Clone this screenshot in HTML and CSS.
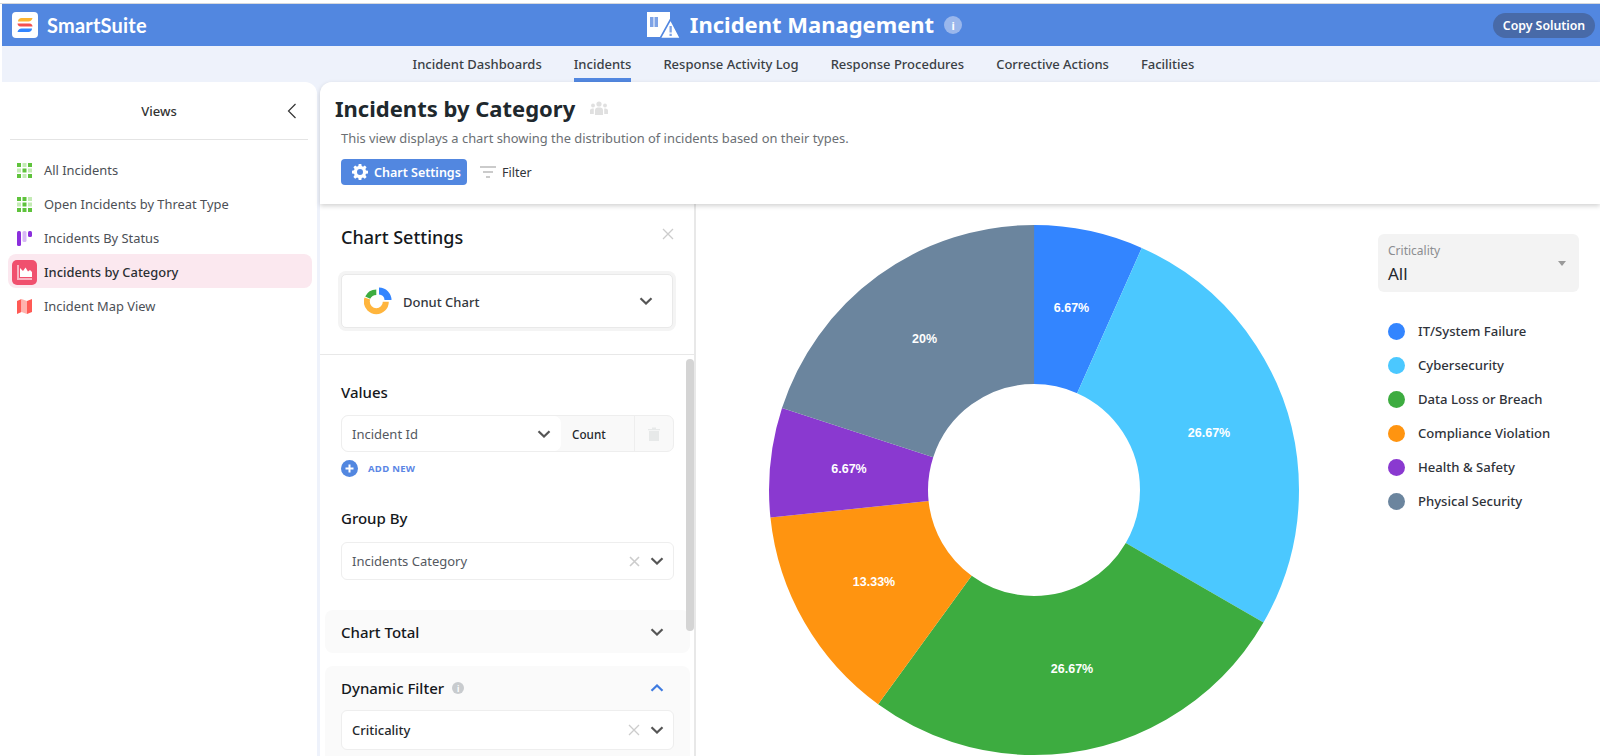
FILE: index.html
```html
<!DOCTYPE html>
<html lang="en">
<head>
<meta charset="utf-8">
<title>Incident Management</title>
<link rel="stylesheet" href="styles.css">
</head>
<body>
<div class="app">
  <header class="topbar">
    <div class="brand">
      <span class="logo">
        <svg width="26" height="26" viewBox="0 0 26 26"><rect width="26" height="26" rx="4" fill="#fff"/><path d="M6 9.500C6 7.500 7.500 6 9.500 6H20.500C20 8 18.500 9.500 16.500 9.500Z" fill="#fdb531"/><path d="M5.500 11.500H17.500C19.500 11.500 20.500 13 20.500 14.500H8.500C6.500 14.500 5.500 13 5.500 11.500Z" fill="#f4504f"/><path d="M9.500 16.500H20C20 18.500 18.500 20 16.500 20H5.500C6 18 7.500 16.500 9.500 16.500Z" fill="#3385ff"/></svg>
      </span>
      <span class="brand-name">SmartSuite</span>
    </div>
    <div class="app-title">
      <svg class="title-icon" width="34" height="27" viewBox="0 0 34 27"><path d="M0 0H23V25H0Z" fill="#fff"/><path d="M3 5H6.500V15H3ZM7.500 5H11V15H7.500Z" fill="#7ea3e6"/><path d="M23.500 7.500 33.500 26.500H13Z" fill="#fff" stroke="#5287e0" stroke-width="1.600"/><path d="M22.500 14H24.800V20.500H22.500ZM22.500 21.800H24.800V24H22.500Z" fill="#7ea3e6"/></svg>
      <h1>Incident Management</h1>
      <span class="info-dot">i</span>
    </div>
    <div class="top-actions"><button class="copy-btn">Copy Solution</button></div>
  </header>

  <nav class="tabs">
    <a class="tab">Incident Dashboards</a>
    <a class="tab active">Incidents</a>
    <a class="tab">Response Activity Log</a>
    <a class="tab">Response Procedures</a>
    <a class="tab">Corrective Actions</a>
    <a class="tab">Facilities</a>
  </nav>

  <div class="workspace">
    <aside class="sidebar">
      <div class="side-head">
        <span class="side-title">Views</span>
        <svg class="side-collapse" width="10" height="16" viewBox="0 0 10 16"><path d="M8.500 1 1.500 8l7 7" fill="none" stroke="#333" stroke-width="1.200"/></svg>
      </div>
      <ul class="view-list">
        <li class="view">
          <svg width="15" height="15" viewBox="0 0 15 15"><path fill="#5fc33c" d="M0 0h4v4H0zM11 0h4v4h-4zM5.500 5.500h4v4h-4zM0 11h4v4H0zM11 11h4v4h-4z"/><path fill="#c4ebb5" d="M5.500 0h4v4h-4zM0 5.500h4v4H0zM11 5.500h4v4h-4zM5.500 11h4v4h-4z"/></svg>
          All Incidents
        </li>
        <li class="view">
          <svg width="15" height="15" viewBox="0 0 15 15"><path fill="#5fc33c" d="M0 0h4v4H0zM5.500 0h4v4h-4zM5.500 5.500h4v4h-4zM0 11h4v4H0zM5.500 11h4v4h-4zM11 11h4v4h-4z"/><path fill="#c4ebb5" d="M11 0h4v4h-4zM0 5.500h4v4H0zM11 5.500h4v4h-4z"/></svg>
          Open Incidents by Threat Type
        </li>
        <li class="view">
          <svg width="15" height="15" viewBox="0 0 15 15"><rect x="0" y="0" width="4" height="15" rx="1.500" fill="#8b2fdc"/><rect x="5.500" y="0" width="4" height="11" rx="1.500" fill="#d8b8f6"/><rect x="11" y="0" width="4" height="6" rx="1.500" fill="#8b2fdc"/></svg>
          Incidents By Status
        </li>
        <li class="view current">
          <span class="view-badge"><svg width="15" height="15" viewBox="0 0 15 15"><path d="M0 0H2V13H15V15H0Z" fill="#f8b4c2"/><path d="M3 12V3L6 6 8.500 2.500 11 6.500 13 5 15 7V12Z" fill="#fff"/></svg></span>
          Incidents by Category
        </li>
        <li class="view">
          <svg width="15" height="15" viewBox="0 0 15 15"><path d="M0 2 4.500 0V13L0 15Z" fill="#ff5a55"/><path d="M4.500 0 10 2V15L4.500 13Z" fill="#ffb2ad"/><path d="M10 2 15 0V13L10 15Z" fill="#ff5a55"/></svg>
          Incident Map View
        </li>
      </ul>
    </aside>

    <main class="main">
      <section class="view-head">
        <div class="view-title-row">
          <h2>Incidents by Category</h2>
          <svg width="18" height="14" viewBox="0 0 18 14"><g fill="#e0e0e0"><circle cx="9" cy="3" r="2.600"/><circle cx="3" cy="4.500" r="1.900"/><circle cx="15" cy="4.500" r="1.900"/><path d="M5 14V9C5 7 7 6.500 9 6.500S13 7 13 9V14ZM0 13V9.500C0 8 1.500 7.500 3.800 7.500V13ZM18 13V9.500C18 8 16.500 7.500 14.200 7.500V13Z"/></g></svg>
        </div>
        <p class="view-desc">This view displays a chart showing the distribution of incidents based on their types.</p>
        <div class="view-actions">
          <button class="settings-btn">
            <svg width="16" height="16" viewBox="0 0 16 16"><path fill="#fff" fill-rule="evenodd" d="M6.700 0h2.600l.4 2.100 1.300.6 1.800-1.200 1.800 1.800-1.200 1.800.6 1.300 2 .4v2.600l-2 .4-.6 1.300 1.200 1.800-1.800 1.800-1.800-1.200-1.300.6-.4 2H6.700l-.4-2-1.300-.6-1.800 1.200-1.800-1.800 1.200-1.800-.6-1.300-2-.4V6.700l2-.4.6-1.300L1.400 3.200l1.800-1.800L5 2.700l1.300-.6ZM8 5a3 3 0 1 0 0 6 3 3 0 0 0 0-6Z"/></svg>
            Chart Settings
          </button>
          <span class="filter-link">
            <svg width="16" height="12" viewBox="0 0 16 12"><path d="M0 1h16M3 6h10M6 11h4" stroke="#bbb" stroke-width="1.500" fill="none"/></svg>
            Filter
          </span>
        </div>
      </section>

      <div class="split">
        <section class="settings">
          <div class="settings-top">
            <div class="settings-title-row">
              <h3>Chart Settings</h3>
              <svg width="12" height="12" viewBox="0 0 12 12"><path d="M1 1l10 10M11 1 1 11" stroke="#ccc" stroke-width="1.300"/></svg>
            </div>
            <div class="chart-type">
              <svg width="28" height="28" viewBox="0 0 28 28"><circle cx="12.300" cy="14.700" r="9.500" fill="none" stroke="#ffb53d" stroke-width="6" stroke-dasharray="33 60"/><path d="M3.700 10.700A9.500 9.500 0 0 1 12.300 5.200" fill="none" stroke="#3dac40" stroke-width="5.500"/><path d="M15 .5A12.500 12.500 0 0 1 27.500 13H20.500A5.500 5.500 0 0 0 15 7.500Z" fill="#3385ff"/></svg>
              <span class="chart-type-name">Donut Chart</span>
              <svg class="chev" width="14" height="8" viewBox="0 0 14 8"><path d="M1.500 1.200 7 6.500l5.500-5.300" fill="none" stroke="#555" stroke-width="2.200"/></svg>
            </div>
          </div>
          <div class="settings-body">
            <div class="form-block">
              <h4>Values</h4>
              <div class="value-row">
                <div class="value-field">
                  <span>Incident Id</span>
                  <svg class="chev" width="14" height="8" viewBox="0 0 14 8"><path d="M1.500 1.200 7 6.500l5.500-5.300" fill="none" stroke="#555" stroke-width="2.200"/></svg>
                </div>
                <div class="value-agg">Count</div>
                <div class="value-trash">
                  <svg width="12" height="14" viewBox="0 0 12 14"><path d="M0 2h12v1.200H0ZM4 .5h4V2H4ZM1 4h10v10H1Z" fill="#e7e9e9"/></svg>
                </div>
              </div>
              <div class="add-new">
                <svg width="17" height="17" viewBox="0 0 17 17"><circle cx="8.500" cy="8.500" r="8.500" fill="#5287e0"/><path d="M8.500 4.500v8M4.500 8.500h8" stroke="#fff" stroke-width="2"/></svg>
                <span>ADD NEW</span>
              </div>
            </div>
            <div class="form-block group-block">
              <h4>Group By</h4>
              <div class="select">
                <span>Incidents Category</span>
                <svg class="clear" width="11" height="11" viewBox="0 0 11 11"><path d="M1 1l9 9M10 1 1 10" stroke="#ccc" stroke-width="1.600"/></svg>
                <svg class="chev" width="14" height="8" viewBox="0 0 14 8"><path d="M1.500 1.200 7 6.500l5.500-5.300" fill="none" stroke="#555" stroke-width="2.200"/></svg>
              </div>
            </div>
            <div class="panel total-panel">
              <h4>Chart Total</h4>
              <svg class="chev" width="14" height="8" viewBox="0 0 14 8"><path d="M1.500 1.200 7 6.500l5.500-5.300" fill="none" stroke="#555" stroke-width="2.200"/></svg>
            </div>
            <div class="panel filter-panel">
              <div class="filter-head">
                <h4>Dynamic Filter</h4>
                <span class="mini-info">i</span>
                <svg class="chev" width="14" height="8" viewBox="0 0 14 8"><path d="M1.500 6.800 7 1.500l5.500 5.300" fill="none" stroke="#3f7be0" stroke-width="2.200"/></svg>
              </div>
              <div class="select filter-select">
                <span>Criticality</span>
                <svg class="clear" width="12" height="12" viewBox="0 0 12 12"><path d="M1 1l10 10M11 1 1 11" stroke="#ccc" stroke-width="1.300"/></svg>
                <svg class="chev" width="14" height="8" viewBox="0 0 14 8"><path d="M1.500 1.200 7 6.500l5.500-5.300" fill="none" stroke="#555" stroke-width="2.200"/></svg>
              </div>
            </div>
          </div>
          <span class="scroll-thumb"></span>
        </section>

        <section class="chart-area">
          <svg class="donut" width="540" height="540" viewBox="0 0 540 540">
            <g fill="none" stroke-width="159" transform="rotate(-90 270 270)">
              <circle cx="270" cy="270" r="185.500" pathLength="100" stroke="#3385ff" stroke-dasharray="6.670 93.330"/>
              <circle cx="270" cy="270" r="185.500" pathLength="100" stroke="#4bc8ff" stroke-dasharray="26.670 73.330" stroke-dashoffset="-6.670"/>
              <circle cx="270" cy="270" r="185.500" pathLength="100" stroke="#3dac40" stroke-dasharray="26.670 73.330" stroke-dashoffset="-33.340"/>
              <circle cx="270" cy="270" r="185.500" pathLength="100" stroke="#ff9410" stroke-dasharray="13.330 86.670" stroke-dashoffset="-60.010"/>
              <circle cx="270" cy="270" r="185.500" pathLength="100" stroke="#8a39d0" stroke-dasharray="6.670 93.330" stroke-dashoffset="-73.340"/>
              <circle cx="270" cy="270" r="185.500" pathLength="100" stroke="#6b859e" stroke-dasharray="20 80" stroke-dashoffset="-80.010"/>
            </g>
            <g class="slice-labels" text-anchor="middle">
              <text x="307.500" y="92">6.67%</text>
              <text x="445" y="217">26.67%</text>
              <text x="308" y="453">26.67%</text>
              <text x="110" y="366">13.33%</text>
              <text x="85" y="253">6.67%</text>
              <text x="160.500" y="123">20%</text>
            </g>
          </svg>
          <div class="chart-side">
            <div class="crit-select">
              <div>
                <div class="crit-label">Criticality</div>
                <div class="crit-value">All</div>
              </div>
              <span class="crit-caret"></span>
            </div>
            <ul class="legend">
              <li><span class="dot dot-blue"></span>IT/System Failure</li>
              <li><span class="dot dot-cyan"></span>Cybersecurity</li>
              <li><span class="dot dot-green"></span>Data Loss or Breach</li>
              <li><span class="dot dot-orange"></span>Compliance Violation</li>
              <li><span class="dot dot-purple"></span>Health &amp; Safety</li>
              <li><span class="dot dot-slate"></span>Physical Security</li>
            </ul>
          </div>
        </section>
      </div>
    </main>
  </div>
</div>
</body>
</html>
```
FILE: styles.css
```css
* { box-sizing: border-box; }
html, body { margin: 0; height: 100%; overflow: hidden; }
body { background: #fff; font-family: "Noto Sans", "Open Sans", sans-serif; color: #30343a; }
h1, h2, h3, h4, p, ul { margin: 0; padding: 0; }
ul { list-style: none; }
button { font-family: inherit; border: 0; cursor: pointer; }

.app { display: flex; flex-direction: column; height: 756px; padding: 3px 0 0 2px; overflow: hidden; background: #fff; }
.app::before { content: ""; display: block; height: 1px; background: #d6d8dc; margin-left: -2px; flex: none; }

.topbar { display: grid; grid-template-columns: 1fr auto 1fr; align-items: center; height: 42px; background: #5287e0; padding: 0 5px 0 10px; flex: none; }
.brand { display: flex; align-items: center; gap: 9px; }
.logo { display: flex; width: 26px; height: 26px; }
.brand-name { font-family: "Lato", sans-serif; font-weight: 700; font-size: 20px; color: #fff; letter-spacing: .2px; }
.app-title { display: flex; align-items: center; color: #fff; }
.title-icon { margin: 0 9px 0 2px; }
.app-title h1 { font-size: 22px; font-weight: 700; line-height: 30px; margin-bottom: 2px; }
.info-dot { display: flex; align-items: center; justify-content: center; width: 18px; height: 18px; margin-left: 10px; border-radius: 50%; background: #9ab7ec; color: #fff; font-size: 11px; font-weight: 700; }
.top-actions { display: flex; justify-content: flex-end; }
.copy-btn { height: 25px; width: 102px; border-radius: 13px; background: #486aa8; color: #fff; font-size: 12.300px; font-weight: 600; padding: 0; }

.tabs { display: flex; justify-content: center; gap: 32px; height: 36px; background: #eef2fb; flex: none; padding-left: 5px; }
.tab { display: flex; align-items: center; font-size: 13px; font-weight: 500; color: #3a3f45; padding-top: 4px; border-bottom: 4px solid transparent; }
.tab.active { border-bottom-color: #5287e0; }

.workspace { display: flex; flex: 1; min-height: 0; background: #eef2fb; gap: 3px; }
.sidebar { width: 315px; flex: none; background: #fff; border-radius: 0 12px 0 0; padding: 0 5px 0 6px; }
.side-head { position: relative; display: flex; align-items: center; justify-content: center; height: 58px; margin: 0 4px 0 2px; border-bottom: 1px solid #e4e4e4; }
.side-title { font-size: 13px; font-weight: 500; color: #333; }
.side-collapse { position: absolute; right: 11px; top: 21px; }
.view-list { display: flex; flex-direction: column; margin-top: 12px; }
.view { display: flex; align-items: center; gap: 12px; height: 34px; padding: 2px 0 0 9px; font-size: 12.900px; color: #4c5056; border-radius: 8px; }
.view.current { background: #fbe8ef; color: #2b2f33; font-weight: 500; padding-left: 4px; gap: 7px; }
.view-badge { display: flex; align-items: center; justify-content: center; width: 25px; height: 25px; border-radius: 5px; background: #f0506e; }

.main { flex: 1; min-width: 0; display: flex; flex-direction: column; background: #fff; border-radius: 12px 0 0 0; }
.view-head { height: 122px; flex: none; padding: 10px 15px 0 15px; box-shadow: 0 2px 5px rgba(0,0,0,.18); position: relative; z-index: 2; background: #fff; border-radius: 12px 0 0 0; }
.view-title-row { display: flex; align-items: center; gap: 15px; height: 31px; }
.view-title-row h2 { font-size: 22px; font-weight: 700; color: #20282d; }
.view-desc { font-size: 12.900px; color: #6b6f74; margin: 6px 0 0 6px; line-height: 18px; }
.view-actions { display: flex; align-items: center; gap: 13px; margin: 12px 0 0 6px; }
.settings-btn { display: flex; align-items: center; gap: 6px; height: 26px; width: 126px; padding-left: 11px; border-radius: 4px; background: #5287e0; color: #fff; font-size: 12.500px; font-weight: 600; }
.filter-link { display: flex; align-items: center; gap: 6px; font-size: 12.500px; color: #30343a; }

.split { display: flex; flex: 1; min-height: 0; }
.settings { position: relative; width: 376px; flex: none; border-right: 2px solid #e8e8e8; overflow: hidden; }
.settings-top { height: 151px; border-bottom: 1px solid #e8e8e8; padding: 18px 21px 0 21px; }
.settings-title-row { display: flex; align-items: flex-start; justify-content: space-between; }
.settings-title-row h3 { font-size: 18px; font-weight: 500; color: #15181c; line-height: 30px; }
.settings-title-row svg { margin: 6px -1px 0 0; }
.chart-type { display: flex; align-items: center; height: 54px; margin-top: 22px; border: 1px solid #e9e9e9; border-radius: 5px; background: #fff; box-shadow: 0 0 0 3px #f4f4f4; padding-left: 22px; }
.chart-type-name { font-size: 13px; font-weight: 500; color: #33373d; margin-left: 11px; padding-top: 1px; flex: 1; }
.chart-type .chev { margin-right: 19px; }

.settings-body { padding: 25px 20px 0 5px; }
.form-block { padding-left: 16px; }
.form-block h4, .panel h4 { font-size: 15px; font-weight: 500; color: #15181c; line-height: 24px; }
.value-row { display: flex; height: 37px; margin-top: 11px; border: 1px solid #eeeeee; border-radius: 7px; background: #f9f9f9; font-size: 13px; }
.value-field { display: flex; align-items: center; justify-content: space-between; width: 219px; padding: 0 10px; background: #fff; border-radius: 7px; color: #54595f; }
.value-agg { display: flex; align-items: center; width: 74px; padding-left: 11px; border-right: 1px solid #eee; font-size: 11.700px; font-weight: 500; color: #25282c; }
.value-trash { flex: 1; display: flex; align-items: center; justify-content: center; }
.add-new { display: flex; align-items: center; gap: 10px; margin-top: 8px; }
.add-new span { font-size: 9.500px; font-weight: 700; color: #5b86e5; letter-spacing: .3px; }
.group-block { margin-top: 29px; }
.select { display: flex; align-items: center; height: 38px; margin-top: 12px; padding: 0 9px 0 10px; border: 1px solid #eeeeee; border-radius: 6px; background: #fff; font-size: 13px; color: #54595f; }
.select span { flex: 1; }
.select .clear { margin-right: 10px; }
.panel { background: #fafafa; border-radius: 8px; padding: 0 16px 0 16px; margin-right: -16px; }
.total-panel { display: flex; align-items: center; justify-content: space-between; height: 43px; margin-top: 30px; padding-right: 26px; }
.filter-panel { margin-top: 13px; height: 120px; }
.filter-head { display: flex; align-items: center; height: 44px; gap: 8px; padding-right: 10px; }
.filter-head .chev { margin-left: auto; }
.mini-info { display: flex; align-items: center; justify-content: center; width: 12px; height: 12px; border-radius: 50%; background: #c8cbce; color: #fff; font-size: 8px; font-weight: 700; }
.filter-select { margin-top: 0; height: 40px; color: #25282c; font-weight: 500; }
.scroll-thumb { position: absolute; right: 0; top: 155px; width: 8px; height: 272px; background: #d4d4d4; border-radius: 4px; }

.chart-area { flex: 1; min-width: 0; display: flex; align-items: flex-start; padding: 16px 0 0 68px; overflow: hidden; }
.donut { flex: none; }
.slice-labels text { font-family: "Liberation Sans", Arial, sans-serif; font-size: 12.500px; font-weight: 700; fill: #fff; }
.chart-side { flex: none; width: 201px; margin: 14px 0 0 74px; }
.crit-select { display: flex; align-items: center; justify-content: space-between; height: 58px; padding: 2px 13px 0 10px; border-radius: 6px; background: #f3f3f3; }
.crit-label { font-size: 12px; color: #8b8d90; line-height: 16px; }
.crit-value { font-size: 17px; color: #25282c; line-height: 24px; margin-top: 3px; }
.crit-caret { width: 0; height: 0; border-left: 4.500px solid transparent; border-right: 4.500px solid transparent; border-top: 5px solid #9a9a9a; margin-bottom: 2px; }
.legend { margin-top: 22px; padding-left: 10px; }
.legend li { display: flex; align-items: center; gap: 13px; height: 34px; font-size: 13.100px; font-weight: 500; color: #2f333a; }
.dot { width: 17px; height: 17px; border-radius: 50%; flex: none; }
.dot-blue { background: #3385ff; }
.dot-cyan { background: #4bc8ff; }
.dot-green { background: #3dac40; }
.dot-orange { background: #ff9410; }
.dot-purple { background: #8a39d0; }
.dot-slate { background: #6b859e; }
```
